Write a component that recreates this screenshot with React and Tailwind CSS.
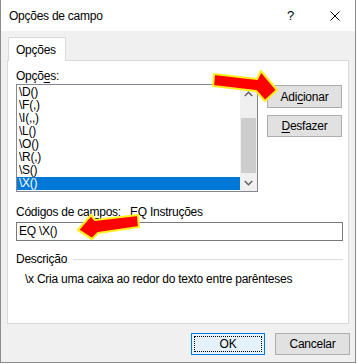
import React from 'react'

const options = ['\\D()', '\\F(,)', '\\I(,,)', '\\L()', '\\O()', '\\R(,)', '\\S()', '\\X()']

function Button({ children, className = '' }) {
  return (
    <div className={`h-[22px] w-[75px] border border-[#adadad] bg-[#e1e1e1] flex items-center justify-center text-[12px] leading-none ${className}`}>
      {children}
    </div>
  )
}

function Arrows() {
  return (
    <svg className="absolute left-0 top-0 pointer-events-none" width="358" height="364" viewBox="0 0 358 364">
      <g fill="#ff0000" stroke="#ffee22" strokeWidth="2.2" strokeLinejoin="round">
        <polygon points="214,74 257,79 261,71 277,90 265,101 256,91 213,86" />
        <polygon points="78,230 91,215 95,220 138,215 139,227 98,233 92,239" />
      </g>
    </svg>
  )
}

export default function App() {
  return (
    <div className="relative w-[358px] h-[364px] bg-white overflow-hidden font-['Segoe_UI','Liberation_Sans',Arial,sans-serif] tracking-[-0.25px] text-black">
      <div className="w-[356px] h-[363px] border-x border-b border-[#8c8c8c] bg-[#f0f0f0] flex flex-col">
        {/* title bar */}
        <div className="h-[31px] bg-white flex items-center pl-[8px] pr-[15px] shrink-0">
          <span className="text-[12px]">Opções de campo</span>
          <span className="ml-auto text-[13px]">?</span>
          <svg className="ml-[36px]" width="10" height="10" viewBox="0 0 10 10">
            <path d="M0.5 0.5 L9.5 9.5 M9.5 0.5 L0.5 9.5" stroke="#000" strokeWidth="1" />
          </svg>
        </div>

        <div className="flex-1 flex flex-col px-[6px] pt-[6px]">
          {/* tab */}
          <div className="ml-[1px] w-[58px] h-[24px] -mb-px relative z-10 bg-white border border-b-0 border-[#d9d9d9] flex items-center pl-[7px] text-[12px]">
            Opções
          </div>

          {/* panel */}
          <div className="h-[264px] border border-[#d9d9d9] bg-white pl-[8px] pt-[8px] flex flex-col">
            <div className="h-[15px] text-[12px] leading-[15px]">
              Opçõ<span className="underline underline-offset-2">e</span>s:
            </div>

            <div className="flex gap-[9px]">
              <div className="w-[242px] h-[108px] border border-[#828790] flex">
                <div className="flex-1 pt-[1px]">
                  {options.map((o, i) => (
                    <div
                      key={o}
                      className={`h-[13px] leading-[13px] pl-[2px] text-[12px] ${i === options.length - 1 ? 'bg-[#0078d7] text-white' : ''}`}
                    >
                      {o}
                    </div>
                  ))}
                </div>
                <div className="w-[17px] bg-[#f0f0f0] flex flex-col">
                  <div className="h-[17px] flex items-center justify-center">
                    <svg width="9" height="6" viewBox="0 0 9 6">
                      <path d="M0.8 5 L4.5 1.3 L8.2 5" fill="none" stroke="#606060" strokeWidth="1.5" />
                    </svg>
                  </div>
                  <div className="flex-1 px-[1px]">
                    <div className="mt-[16px] h-[55px] bg-[#cdcdcd]" />
                  </div>
                  <div className="h-[17px] flex items-center justify-center">
                    <svg width="9" height="6" viewBox="0 0 9 6">
                      <path d="M0.8 1 L4.5 4.7 L8.2 1" fill="none" stroke="#606060" strokeWidth="1.5" />
                    </svg>
                  </div>
                </div>
              </div>

              <div className="flex flex-col pt-[1px]">
                <Button className="h-[23px]">
                  <span>
                    Adi<span className="underline underline-offset-2">c</span>ionar
                  </span>
                </Button>
                <Button className="mt-[7px]">
                  <span>
                    <span className="underline underline-offset-2">D</span>esfazer
                  </span>
                </Button>
              </div>
            </div>

            <div className="mt-[13px] h-[15px] text-[12px] leading-[15px] flex">
              <span className="w-[114px]">
                Códigos de ca<span className="underline underline-offset-2">m</span>pos:
              </span>
              <span>EQ Instruções</span>
            </div>
            <div className="mt-[2px] w-[327px] h-[19px] border border-[#7a7a7a] text-[12px] leading-[17px] pl-[2px]">
              EQ \X()
            </div>

            <div className="mt-[11px] w-[327px] h-[15px] flex items-center text-[12px] leading-[15px]">
              <span>Descrição</span>
              <div className="flex-1 h-px bg-[#dcdcdc] ml-[6px]" />
            </div>
            <div className="mt-[5px] pl-[9px] text-[12px] leading-[15px]">
              \x Cria uma caixa ao redor do texto entre parênteses
            </div>
          </div>

          {/* bottom buttons */}
          <div className="mt-[9px] flex justify-end gap-[10px] -mr-[1px]">
            <div className="h-[22px] w-[74px] border border-[#0078d7] bg-[#e5f1fb] p-[2px]">
              <div className="h-full w-full border border-dotted border-black flex items-center justify-center text-[12px] leading-none">
                OK
              </div>
            </div>
            <Button className="w-[74px]">Cancelar</Button>
          </div>
        </div>
      </div>
      <Arrows />
    </div>
  )
}
